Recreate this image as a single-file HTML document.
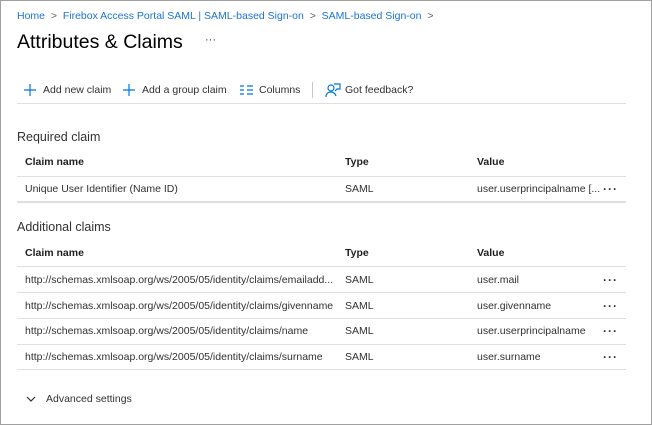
<!DOCTYPE html><html><head><style>
body{margin:0;width:652px;height:425px;overflow:hidden;font-family:"Liberation Sans",sans-serif;color:#323130;background:#fff}
.frame{position:absolute;left:0;top:0;width:650px;height:423px;border:1px solid #a0a0a0}
.a{position:absolute;white-space:nowrap;font-size:10.5px}
.bc{color:#1a73d8;font-size:10.5px}
.h{font-size:10.5px;color:#201f1e;font-weight:600}
.line{position:absolute;left:17px;width:609px;height:1px;background:#e1dfdd}
.dots{position:absolute;font-size:12px;font-weight:bold;letter-spacing:1px}
.plus{position:absolute;width:12px;height:12px}
</style></head><body><div class="frame"></div>
<div class="a bc" style="left:17px;top:10px">Home <span style="color:#605e5c">&nbsp;&gt;&nbsp;</span> Firebox Access Portal SAML | SAML-based Sign-on <span style="color:#605e5c">&nbsp;&gt;&nbsp;</span> SAML-based Sign-on <span style="color:#605e5c">&nbsp;&gt;</span></div>
<div class="a" style="left:17px;top:31px;font-size:19.5px;color:#000">Attributes &amp; Claims</div>
<div class="a" style="left:205px;top:34px;font-size:11px">···</div>
<svg class="plus" style="left:24px;top:84px" viewBox="0 0 12 12" stroke="#0078d4" stroke-width="1.2"><path d="M6 0v12M0 6h12"/></svg>
<div class="a" style="left:43px;top:84px">Add new claim</div>
<svg class="plus" style="left:123px;top:84px" viewBox="0 0 12 12" stroke="#0078d4" stroke-width="1.2"><path d="M6 0v12M0 6h12"/></svg>
<div class="a" style="left:142px;top:84px">Add a group claim</div>
<svg style="position:absolute;left:240px;top:85px" width="13" height="10" viewBox="0 0 13 10" stroke="#0078d4" stroke-width="1.2"><path d="M0 1h4M0 5h4M0 9h4M7 1h6M7 5h6M7 9h6"/></svg>
<div class="a" style="left:259px;top:84px">Columns</div>
<div style="position:absolute;left:312px;top:82px;width:1px;height:16px;background:#c8c6c4"></div>
<svg style="position:absolute;left:325px;top:82px" width="16" height="16" viewBox="0 0 16 16" fill="none" stroke="#0078d4" stroke-width="1.2"><circle cx="6" cy="6" r="3"/><path d="M1 15c0-4 3-5 5-5s4 1 5 4"/><path d="M9 2h6v5h-3l-2 2"/></svg>
<div class="a" style="left:345px;top:84px">Got feedback?</div>
<div style="position:absolute;left:17px;top:103px;width:609px;height:1px;background:#e1dfdd"></div>
<div class="a" style="left:17px;top:130px;font-size:12.5px">Required claim</div>
<div class="a h" style="left:25px;top:156px">Claim name</div>
<div class="a h" style="left:345px;top:156px">Type</div>
<div class="a h" style="left:477px;top:156px">Value</div>
<div class="line" style="top:176px"></div>
<div class="a" style="left:25px;top:183px">Unique User Identifier (Name ID)</div>
<div class="a" style="left:345px;top:183px">SAML</div>
<div class="a" style="left:477px;top:183px">user.userprincipalname [...</div>
<div class="dots" style="left:603px;top:182px">···</div>
<div class="line" style="top:201px;height:2px"></div>
<div class="a" style="left:17px;top:220px;font-size:12.5px">Additional claims</div>
<div class="a h" style="left:25px;top:247px">Claim name</div>
<div class="a h" style="left:345px;top:247px">Type</div>
<div class="a h" style="left:477px;top:247px">Value</div>
<div class="line" style="top:266px"></div>
<div class="a" style="left:25px;top:274px">http://schemas.xmlsoap.org/ws/2005/05/identity/claims/emailadd...</div>
<div class="a" style="left:345px;top:274px">SAML</div><div class="a" style="left:477px;top:274px">user.mail</div>
<div class="dots" style="left:603px;top:273px">···</div>
<div class="line" style="top:292px"></div>
<div class="a" style="left:25px;top:300px">http://schemas.xmlsoap.org/ws/2005/05/identity/claims/givenname</div>
<div class="a" style="left:345px;top:300px">SAML</div><div class="a" style="left:477px;top:300px">user.givenname</div>
<div class="dots" style="left:603px;top:299px">···</div>
<div class="line" style="top:318px"></div>
<div class="a" style="left:25px;top:325px">http://schemas.xmlsoap.org/ws/2005/05/identity/claims/name</div>
<div class="a" style="left:345px;top:325px">SAML</div><div class="a" style="left:477px;top:325px">user.userprincipalname</div>
<div class="dots" style="left:603px;top:324px">···</div>
<div class="line" style="top:344px"></div>
<div class="a" style="left:25px;top:351px">http://schemas.xmlsoap.org/ws/2005/05/identity/claims/surname</div>
<div class="a" style="left:345px;top:351px">SAML</div><div class="a" style="left:477px;top:351px">user.surname</div>
<div class="dots" style="left:603px;top:350px">···</div>
<div class="line" style="top:369px"></div>
<svg style="position:absolute;left:26px;top:396px" width="10" height="7" viewBox="0 0 10 7" fill="none" stroke="#323130" stroke-width="1.2"><path d="M1 1l4 4 4-4"/></svg>
<div class="a" style="left:46px;top:393px">Advanced settings</div>
</body></html>
